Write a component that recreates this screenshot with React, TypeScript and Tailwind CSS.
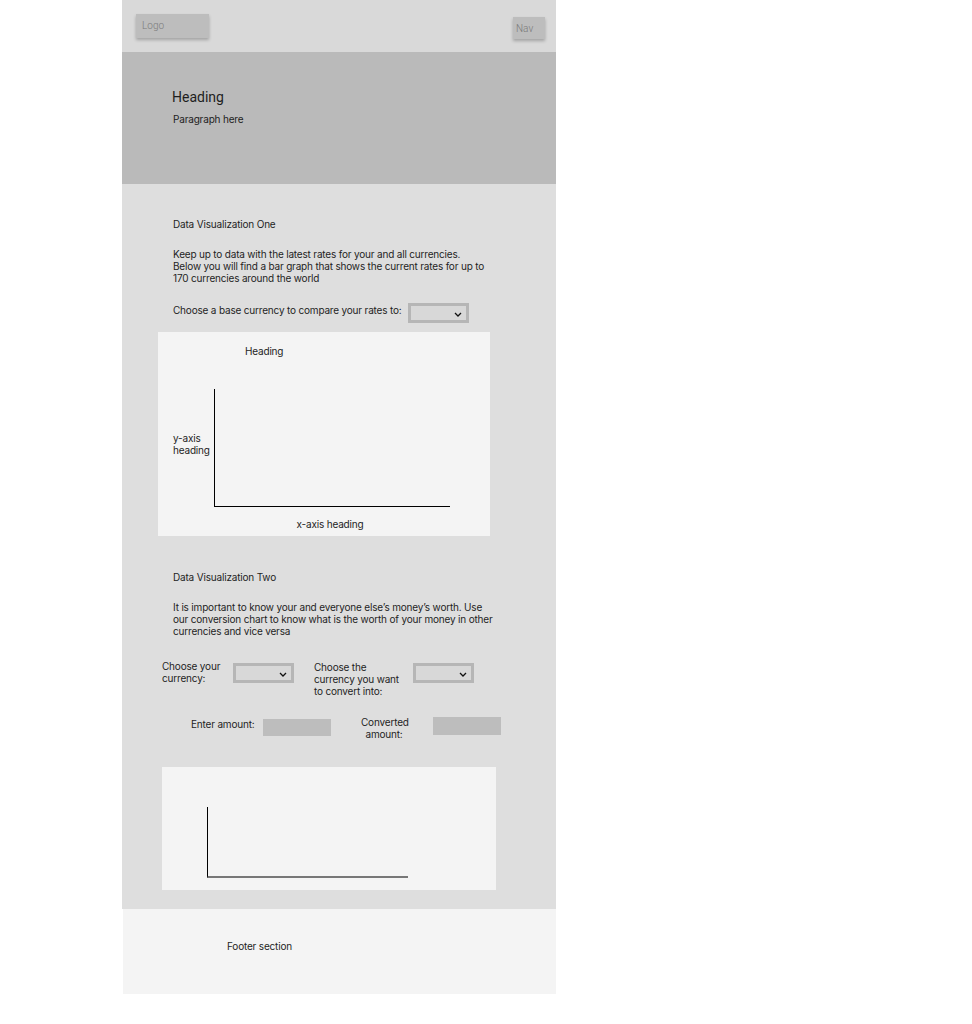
function Chevron() {
  return (
    <svg width="8" height="5" viewBox="0 0 8 5" className="mr-[4px] mt-[2px]">
      <polyline points="1,1 4,4 7,1" fill="none" stroke="#111" strokeWidth="1.3" />
    </svg>
  )
}

function Select({ className = '' }: { className?: string }) {
  return (
    <div
      className={`flex h-[20px] w-[61px] shrink-0 items-center justify-end border-[3px] border-[#b6b6b6] bg-[#d8d8d8] ${className}`}
    >
      <Chevron />
    </div>
  )
}

export default function App() {
  return (
    <div className="min-h-screen bg-white font-['Inter',sans-serif] text-[10px] leading-[12px] tracking-[-0.18px] text-[#1e1e1e]">
      <div className="ml-[122px] w-[434px]">
        {/* header */}
        <header className="flex h-[52px] items-start justify-between bg-[#d9d9d9] pl-[14px] pr-[11px] tracking-normal">
          <div className="mt-[14px] h-[24px] w-[73px] bg-[#bdbdbd] pl-[6px] pt-[6px] font-['Roboto',sans-serif] font-light text-[#7a7a7a] shadow-[0_2px_3px_rgba(0,0,0,0.25)]">
            Logo
          </div>
          <div className="mt-[17px] h-[22px] w-[32px] bg-[#bdbdbd] pl-[3px] pt-[6px] font-['Roboto',sans-serif] font-light text-[#7a7a7a] shadow-[0_2px_3px_rgba(0,0,0,0.25)]">
            Nav
          </div>
        </header>

        {/* hero */}
        <section className="h-[132px] bg-[#bababa] pl-[50px] pt-[37px]">
          <h1 className="font-['Roboto',sans-serif] text-[14px] leading-[17px] tracking-normal">Heading</h1>
          <p className="mt-[7px] pl-[1px]">Paragraph here</p>
        </section>

        {/* main */}
        <main className="bg-[#dedede] pb-[19px] pt-[34px]">
          <div className="pl-[51px]">
            <h2>Data Visualization One</h2>
            <p className="mt-[18px] whitespace-nowrap">
              Keep up to data with the latest rates for your and all currencies.
              <br />
              Below you will find a bar graph that shows the current rates for up to
              <br />
              170 currencies around the world
            </p>
            <div className="mt-[19px] flex items-start">
              <span className="pt-[1px]">Choose a base currency to compare your rates to:</span>
              <Select className="ml-[7px]" />
            </div>
          </div>

          <div className="ml-[36px] mt-[9px] h-[204px] w-[332px] bg-[#f4f4f4] pt-[13px]">
            <div className="ml-[87px]">Heading</div>
            <div className="mt-[32px] flex items-start">
              <div className="ml-[15px] mt-[43px] w-[41px]">
                y-axis
                <br />
                heading
              </div>
              <div className="h-[118px] w-[236px] border-b-[1.5px] border-l-[1.5px] border-black" />
            </div>
            <div className="ml-[54px] mt-[11px] w-[236px] text-center">x-axis heading</div>
          </div>

          <div className="pl-[51px]">
            <h2 className="mt-[35px]">Data Visualization Two</h2>
            <p className="mt-[18px] whitespace-nowrap">
              It is important to know your and everyone else’s money’s worth. Use
              <br />
              our conversion chart to know what is the worth of your money in other
              <br />
              currencies and vice versa
            </p>
          </div>

          <div className="ml-[40px] mt-[23px] flex items-start">
            <div className="w-[71px]">
              Choose your
              <br />
              currency:
            </div>
            <Select className="mt-[3px]" />
            <div className="ml-[20px] w-[99px] pt-[1px]">
              Choose the
              <br />
              currency you want
              <br />
              to convert into:
            </div>
            <Select className="mt-[3px]" />
          </div>

          <div className="ml-[69px] mt-[19px] flex items-start">
            <div className="w-[72px] pt-[2px]">Enter amount:</div>
            <div className="mt-[3px] h-[17px] w-[68px] bg-[#bdbdbd]" />
            <div className="ml-[30px] w-[46px] text-center">
              Converted
              <br />
              amount:
            </div>
            <div className="ml-[26px] mt-[1px] h-[18px] w-[68px] bg-[#bdbdbd]" />
          </div>

          <div className="ml-[40px] mt-[27px] h-[123px] w-[334px] bg-[#f4f4f4] pl-[45px] pt-[40px]">
            <div className="h-[71px] w-[201px] border-b-[2px] border-l-[1.5px] border-b-[#777] border-l-black" />
          </div>
        </main>

        {/* footer */}
        <footer className="ml-[1px] h-[85px] bg-[#f4f4f4] pl-[104px] pt-[31px]">Footer section</footer>
      </div>
    </div>
  )
}
